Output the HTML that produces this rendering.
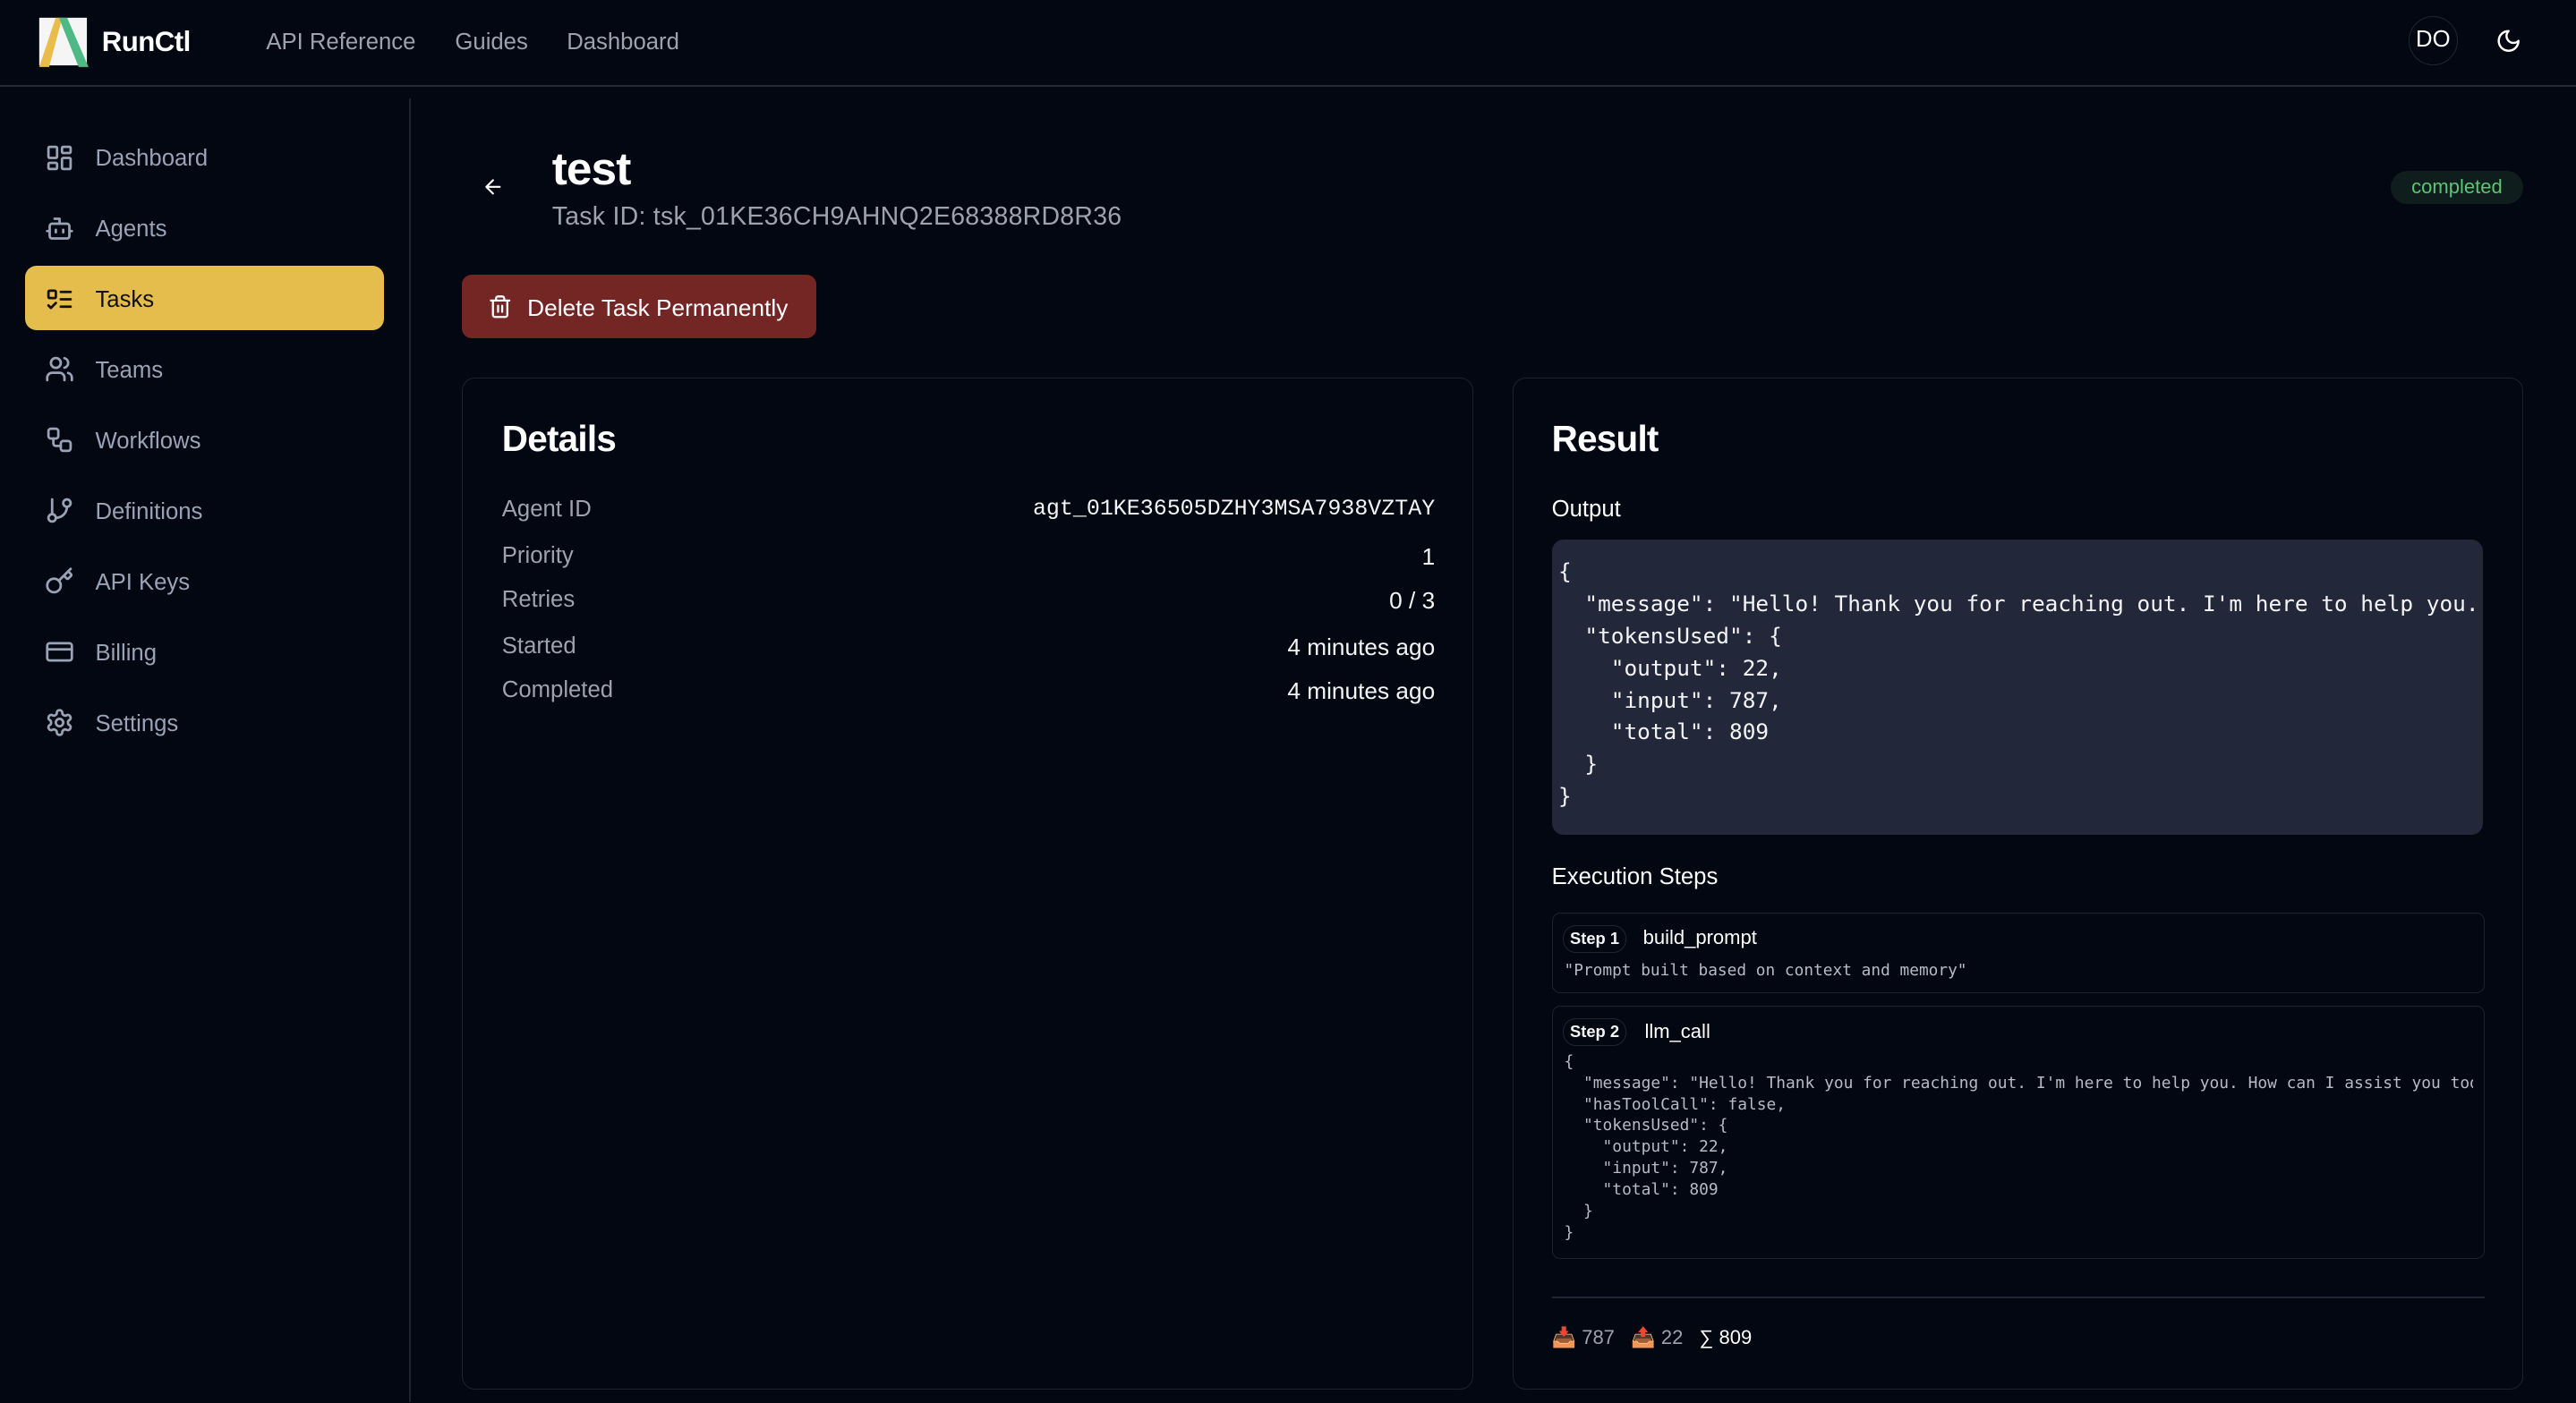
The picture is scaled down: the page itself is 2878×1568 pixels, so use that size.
<!DOCTYPE html>
<html><head><meta charset="utf-8">
<style>
*{box-sizing:border-box;margin:0;padding:0}
html,body{width:2878px;height:1568px;background:#030712;overflow:hidden}
#w{position:absolute;left:0;top:0;width:1568px;height:854px;zoom:1.83546;font-family:"Liberation Sans",sans-serif;color:#f3f4f6;background:#030712}
.a{position:absolute;white-space:nowrap}
.nav{font-size:14px;color:#9ca3af;top:18px}
.si{position:absolute;left:27px;width:18px;height:18px}
.st{position:absolute;left:58px;font-size:14px;color:#9aa3b5}
.card{position:absolute;border:1px solid #1c2230;border-radius:8px}
.lab{position:absolute;left:24px;font-size:14px;color:#9ca3af}
.val{position:absolute;right:23px;font-size:14.3px;color:#f3f4f6}
.mono{font-family:"Liberation Mono","DejaVu Sans Mono",monospace}
pre{font-family:"DejaVu Sans Mono","Liberation Mono",monospace;white-space:pre;overflow:hidden}
</style></head><body><div id="w">
<div class="a" style="left:0;top:52px;width:1568px;height:1px;background:#262b35"></div>
<svg class="a" style="left:23px;top:10px" width="32" height="32" viewBox="0 0 32 32"><rect x="1" y="1" width="29" height="29" fill="#f5f5f5"/><polygon points="1,31 7,31 15,1 11,1" fill="#e8bd4a"/><polygon points="13,1 18,1 31,31 25,31" fill="#4fb985"/></svg>
<div class="a" style="left:62px;top:16px;font-size:17px;font-weight:bold;color:#fff;letter-spacing:-0.3px">RunCtl</div>
<div class="a nav" style="left:162px">API Reference</div>
<div class="a nav" style="left:277px">Guides</div>
<div class="a nav" style="left:345px">Dashboard</div>
<div class="a" style="left:1466px;top:10px;width:30px;height:30px;border:1px solid #1f2533;border-radius:50%;font-size:14px;text-align:center;line-height:28px;color:#fff">DO</div>
<svg class="a" style="left:1519px;top:17px" width="16" height="16" viewBox="0 0 24 24" fill="none" stroke="#fff" stroke-width="2" stroke-linecap="round" stroke-linejoin="round"><path d="M12 3a6 6 0 0 0 9 9 9 9 0 1 1-9-9Z"/></svg>
<div class="a" style="left:249px;top:60px;width:1px;height:794px;background:#1c2230"></div>
<div class="a" style="left:15px;top:162px;width:219px;height:39px;background:#e5bd4c;border-radius:7px"></div>
<svg class="si" style="top:87px" viewBox="0 0 24 24" fill="none" stroke="#9aa3b5" stroke-width="2" stroke-linecap="round" stroke-linejoin="round"><rect x="3" y="3" width="7" height="9" rx="1"/><rect x="14" y="3" width="7" height="5" rx="1"/><rect x="14" y="12" width="7" height="9" rx="1"/><rect x="3" y="16" width="7" height="5" rx="1"/></svg>
<div class="st" style="top:89px">Dashboard</div>
<svg class="si" style="top:130px" viewBox="0 0 24 24" fill="none" stroke="#9aa3b5" stroke-width="2" stroke-linecap="round" stroke-linejoin="round"><path d="M12 8V4H8"/><rect x="4" y="8" width="16" height="12" rx="2"/><path d="M2 14h2M20 14h2M15 13v2M9 13v2"/></svg>
<div class="st" style="top:132px">Agents</div>
<svg class="si" style="top:173px" viewBox="0 0 24 24" fill="none" stroke="#111" stroke-width="2" stroke-linecap="round" stroke-linejoin="round"><rect x="3" y="5" width="6" height="6" rx="1"/><path d="m3 17 2 2 4-4M13 6h8M13 12h8M13 18h8"/></svg>
<div class="st" style="top:175px;color:#111">Tasks</div>
<svg class="si" style="top:216px" viewBox="0 0 24 24" fill="none" stroke="#9aa3b5" stroke-width="2" stroke-linecap="round" stroke-linejoin="round"><path d="M16 21v-2a4 4 0 0 0-4-4H6a4 4 0 0 0-4 4v2"/><circle cx="9" cy="7" r="4"/><path d="M22 21v-2a4 4 0 0 0-3-3.870M16 3.13a4 4 0 0 1 0 7.75"/></svg>
<div class="st" style="top:218px">Teams</div>
<svg class="si" style="top:259px" viewBox="0 0 24 24" fill="none" stroke="#9aa3b5" stroke-width="2" stroke-linecap="round" stroke-linejoin="round"><rect x="3" y="3" width="8" height="8" rx="2"/><path d="M7 11v4a2 2 0 0 0 2 2h4"/><rect x="13" y="13" width="8" height="8" rx="2"/></svg>
<div class="st" style="top:261px">Workflows</div>
<svg class="si" style="top:302px" viewBox="0 0 24 24" fill="none" stroke="#9aa3b5" stroke-width="2" stroke-linecap="round" stroke-linejoin="round"><path d="M6 3v12"/><circle cx="18" cy="6" r="3"/><circle cx="6" cy="18" r="3"/><path d="M18 9a9 9 0 0 1-9 9"/></svg>
<div class="st" style="top:304px">Definitions</div>
<svg class="si" style="top:345px" viewBox="0 0 24 24" fill="none" stroke="#9aa3b5" stroke-width="2" stroke-linecap="round" stroke-linejoin="round"><path d="m15.5 7.5 2.3 2.3a1 1 0 0 0 1.4 0l2.1-2.1a1 1 0 0 0 0-1.4L19 4M21 2l-9.6 9.6"/><circle cx="7.5" cy="15.5" r="5.5"/></svg>
<div class="st" style="top:347px">API Keys</div>
<svg class="si" style="top:388px" viewBox="0 0 24 24" fill="none" stroke="#9aa3b5" stroke-width="2" stroke-linecap="round" stroke-linejoin="round"><rect x="2" y="5" width="20" height="14" rx="2"/><path d="M2 10h20"/></svg>
<div class="st" style="top:390px">Billing</div>
<svg class="si" style="top:431px" viewBox="0 0 24 24" fill="none" stroke="#9aa3b5" stroke-width="2" stroke-linecap="round" stroke-linejoin="round"><path d="M12.22 2h-.44a2 2 0 0 0-2 2v.18a2 2 0 0 1-1 1.73l-.43.25a2 2 0 0 1-2 0l-.15-.08a2 2 0 0 0-2.730.73l-.22.38a2 2 0 0 0 .73 2.73l.15.1a2 2 0 0 1 1 1.72v.51a2 2 0 0 1-1 1.74l-.15.09a2 2 0 0 0-.73 2.73l.22.38a2 2 0 0 0 2.73.73l.15-.08a2 2 0 0 1 2 0l.43.25a2 2 0 0 1 1 1.73V20a2 2 0 0 0 2 2h.44a2 2 0 0 0 2-2v-.18a2 2 0 0 1 1-1.73l.43-.25a2 2 0 0 1 2 0l.15.08a2 2 0 0 0 2.73-.73l.22-.39a2 2 0 0 0-.73-2.730l-.15-.08a2 2 0 0 1-1-1.74v-.5a2 2 0 0 1 1-1.74l.15-.09a2 2 0 0 0 .73-2.73l-.22-.38a2 2 0 0 0-2.73-.73l-.15.08a2 2 0 0 1-2 0l-.43-.25a2 2 0 0 1-1-1.73V4a2 2 0 0 0-2-2z"/><circle cx="12" cy="12" r="3"/></svg>
<div class="st" style="top:433px">Settings</div>
<svg class="a" style="left:293px;top:107px" width="14" height="14" viewBox="0 0 24 24" fill="none" stroke="#fff" stroke-width="2" stroke-linecap="round" stroke-linejoin="round"><path d="m12 19-7-7 7-7M19 12H5"/></svg>
<div class="a" style="left:336px;top:86px;font-size:28px;font-weight:bold;color:#fff;letter-spacing:-0.5px">test</div>
<div class="a" style="left:336px;top:123px;font-size:15.5px;letter-spacing:0.15px;color:#9ca3af">Task ID: tsk_01KE36CH9AHNQ2E68388RD8R36</div>
<div class="a" style="left:1455px;top:104px;width:81px;height:20px;border-radius:10px;background:#0f1d1d;color:#5cc476;font-size:12px;text-align:center;line-height:20px">completed</div>
<div class="a" style="left:281px;top:167px;width:216px;height:39px;border-radius:6px;background:#742625"></div>
<svg class="a" style="left:297px;top:179px" width="15" height="15" viewBox="0 0 24 24" fill="none" stroke="#fff" stroke-width="2" stroke-linecap="round" stroke-linejoin="round"><path d="M3 6h18M19 6v14a2 2 0 0 1-2 2H7a2 2 0 0 1-2-2V6M8 6V4a2 2 0 0 1 2-2h4a2 2 0 0 1 2 2v2M10 11v6M14 11v6"/></svg>
<div class="a" style="left:321px;top:179px;font-size:14.3px;color:#fff">Delete Task Permanently</div>
<div class="card" style="left:281px;top:230px;width:616px;height:616px">
<div class="a" style="left:24px;top:24px;font-size:22px;font-weight:bold;color:#fff;letter-spacing:-0.4px">Details</div>
<div class="lab" style="top:72px">Agent ID</div><div class="val mono" style="top:72px;font-size:13.6px">agt_01KE36505DZHY3MSA7938VZTAY</div>
<div class="lab" style="top:100px">Priority</div><div class="val" style="top:100px">1</div>
<div class="lab" style="top:127px">Retries</div><div class="val" style="top:127px">0 / 3</div>
<div class="lab" style="top:155px">Started</div><div class="val" style="top:155px">4 minutes ago</div>
<div class="lab" style="top:182px">Completed</div><div class="val" style="top:182px">4 minutes ago</div>
</div>
<div class="card" style="left:921px;top:230px;width:615px;height:616px">
<div class="a" style="left:23px;top:24px;font-size:22px;font-weight:bold;color:#fff;letter-spacing:-0.4px">Result</div>
<div class="a" style="left:23px;top:72px;font-size:14px;color:#fff">Output</div>
<div class="a" style="left:23px;top:98px;width:567px;height:180px;background:#222839;border-radius:7px;overflow:hidden">
<pre style="position:absolute;left:4px;top:10px;font-size:13.3px;line-height:19.5px;color:#f3f4f6">{
  "message": "Hello! Thank you for reaching out. I'm here to help you. How can I assist you today?",
  "tokensUsed": {
    "output": 22,
    "input": 787,
    "total": 809
  }
}</pre></div>
<div class="a" style="left:23px;top:296px;font-size:14px;color:#fff">Execution Steps</div>
<div class="a" style="left:23px;top:325px;width:568px;height:49px;border:1px solid #1c2230;border-radius:5px">
<div class="a" style="left:6px;top:7px;padding:0 4px;height:17px;border:1px solid #1f2533;border-radius:8px;font-size:10px;font-weight:bold;line-height:15px">Step 1</div>
<div class="a" style="left:55px;top:8px;font-size:12px;color:#fff">build_prompt</div>
<pre class="a" style="left:7px;top:29px;font-size:9.7px;color:#b5bac4">"Prompt built based on context and memory"</pre>
</div>
<div class="a" style="left:23px;top:382px;width:568px;height:154px;border:1px solid #1c2230;border-radius:5px;overflow:hidden">
<div class="a" style="left:6px;top:7px;padding:0 4px;height:17px;border:1px solid #1f2533;border-radius:8px;font-size:10px;font-weight:bold;line-height:15px">Step 2</div>
<div class="a" style="left:56px;top:8px;font-size:12px;color:#fff">llm_call</div>
<pre style="position:absolute;left:7px;top:27px;width:553px;font-size:9.75px;line-height:13px;color:#b5bac4">{
  "message": "Hello! Thank you for reaching out. I'm here to help you. How can I assist you today?",
  "hasToolCall": false,
  "tokensUsed": {
    "output": 22,
    "input": 787,
    "total": 809
  }
}</pre>
</div>
<div class="a" style="left:23px;top:559px;width:568px;height:1px;background:#1f2533"></div>
<div class="a" style="left:23px;top:577px;font-size:12px;color:#9ca3af"><span style="color:#8fb4e8">&#x1F4E5;</span> 787 &nbsp; <span style="color:#8fb4e8">&#x1F4E4;</span> 22 &nbsp; <span style="color:#fff">∑ 809</span></div>
</div>
</div></body></html>
